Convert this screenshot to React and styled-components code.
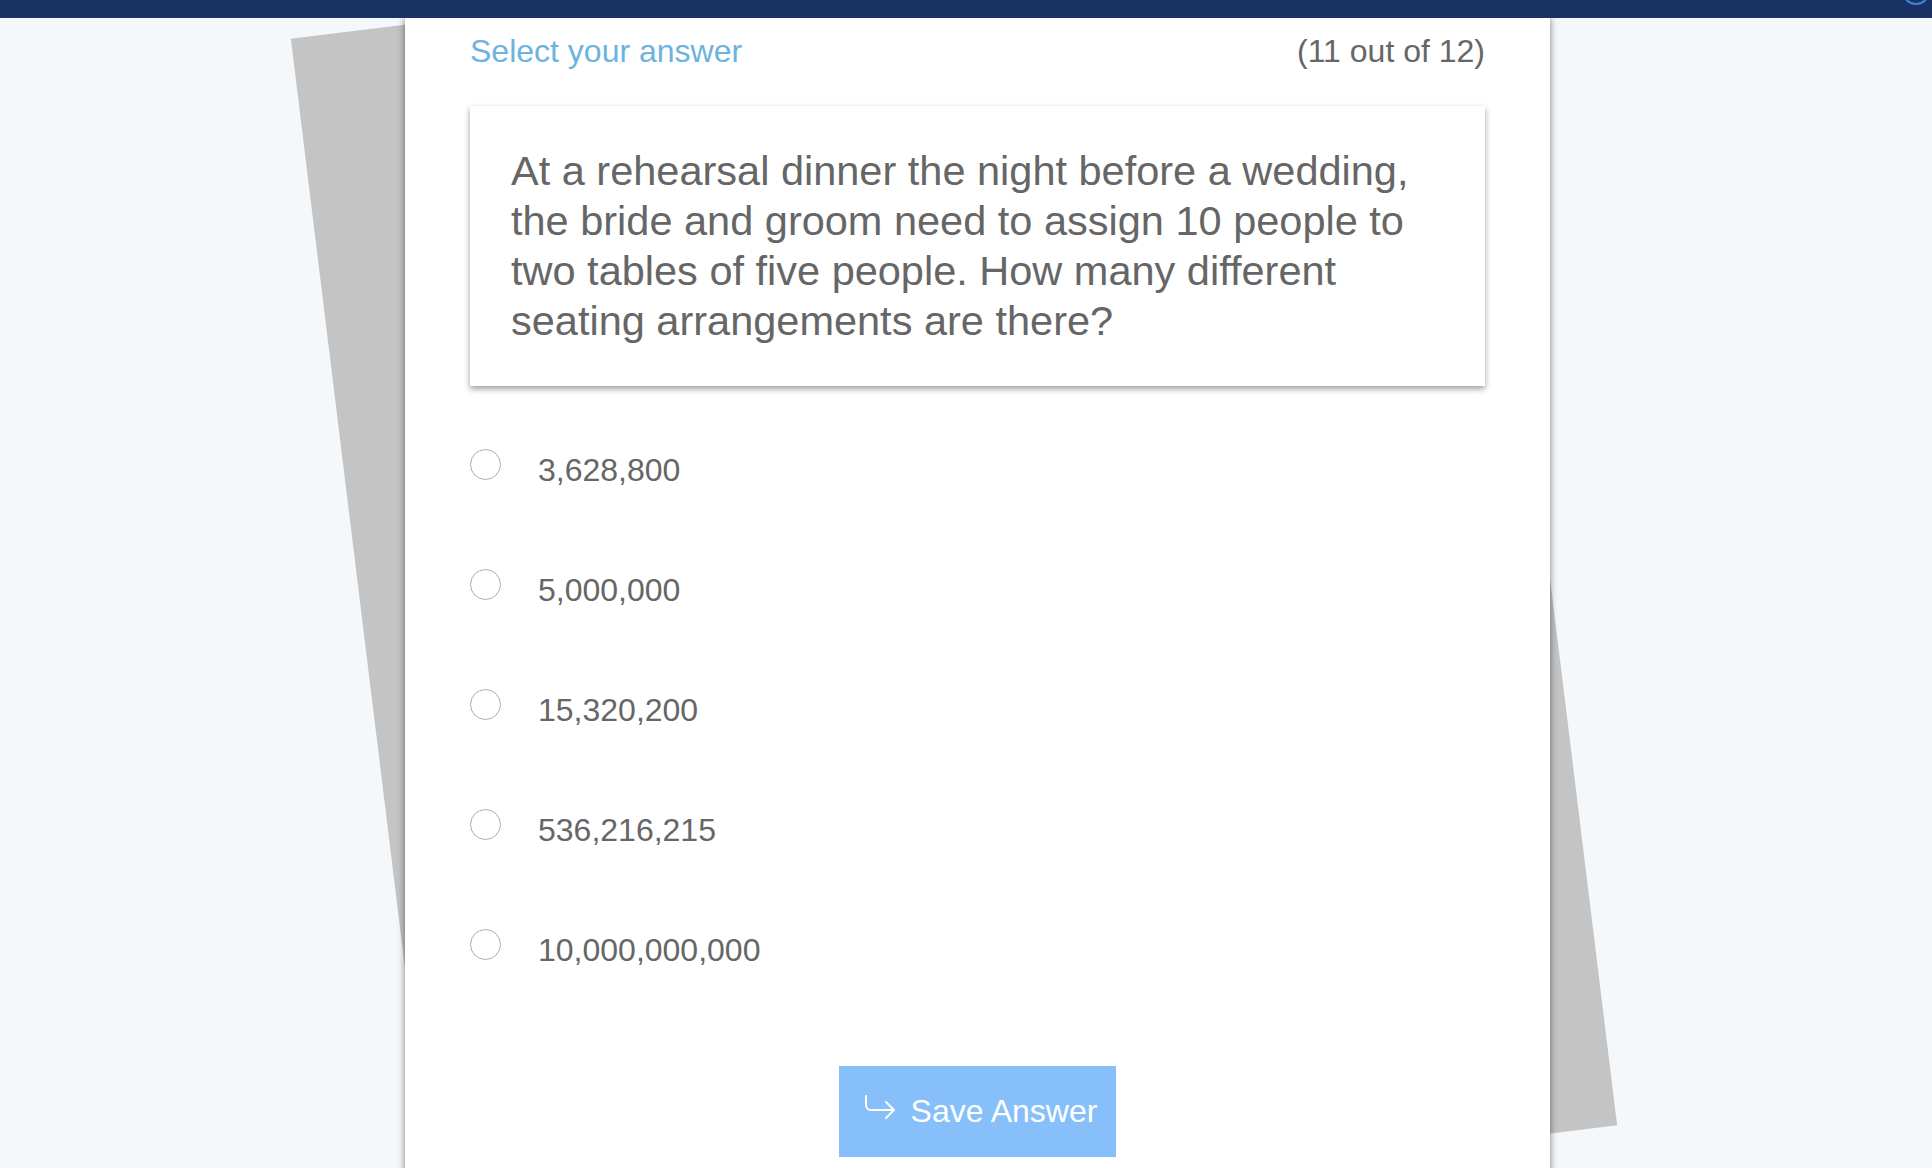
import React from 'react';
import styled, { createGlobalStyle } from 'styled-components';

const GlobalStyle = createGlobalStyle`
  html, body {
    margin: 0;
    padding: 0;
    overflow: hidden;
  }
  body {
    background: #f4f8fb;
    font-family: 'Liberation Sans', Arial, sans-serif;
  }
`;

const TopBar = styled.header`
  position: relative;
  z-index: 2;
  display: flex;
  justify-content: flex-end;
  height: 18px;
  background: #1a3263;
  overflow: hidden;
`;

// avatar sits mostly above the viewport, only its bottom rim shows
const Avatar = styled.div`
  width: 24px;
  height: 24px;
  margin: -23px 2px 0 0;
  border-radius: 50%;
  border: 2px solid #3a86d4;
  background: #1a3263;
`;

const Main = styled.main`
  position: relative;
  display: flex;
  padding-left: 405px;
  min-height: 1150px;
`;

// rotated sheet peeking out behind the card
const Paper = styled.div`
  position: absolute;
  left: 362px;
  top: -56px;
  width: 1184px;
  height: 1240px;
  background: #c4c4c4;
  transform: rotate(-7deg);
  z-index: 0;
`;

const Card = styled.section`
  position: relative;
  z-index: 1;
  box-sizing: border-box;
  width: 1145px;
  min-height: 1200px;
  padding: 15px 65px 40px;
  background: #ffffff;
  box-shadow: 0 0 7px rgba(0, 0, 0, 0.5);
`;

const Header = styled.div`
  display: flex;
  justify-content: space-between;
  align-items: baseline;
  font-size: 32px;
  line-height: 37px;
`;

const Title = styled.h2`
  margin: 0;
  font-size: inherit;
  font-weight: normal;
  color: #6cb3e0;
`;

const Counter = styled.span`
  color: #666;
`;

const QuestionBox = styled.div`
  margin-top: 36px;
  padding: 40px 40px 40px 41px;
  font-size: 41.5px;
  line-height: 50px;
  color: #666;
  background: #fff;
  box-shadow: 0 3px 6px rgba(0, 0, 0, 0.38);
`;

const Options = styled.div`
  margin-top: 24px;
  display: flex;
  flex-direction: column;
`;

const Option = styled.label`
  display: flex;
  align-items: center;
  gap: 37px;
  height: 120px;
  cursor: pointer;
`;

const Radio = styled.span`
  box-sizing: border-box;
  flex: none;
  width: 31px;
  height: 31px;
  margin-bottom: 12px;
  border-radius: 50%;
  border: 1.5px solid #a4aebd;
  background: #fff;
`;

const OptionText = styled.span`
  font-size: 32px;
  color: #666;
`;

const Actions = styled.div`
  display: flex;
  justify-content: center;
  margin-top: 56px;
`;

const SaveButton = styled.button`
  display: flex;
  align-items: center;
  gap: 15px;
  height: 91px;
  padding: 0 19px 0 25px;
  border: none;
  background: #86bff9;
  color: #fff;
  font-family: inherit;
  font-size: 32px;
  cursor: pointer;

  svg {
    margin-bottom: 8px;
  }
`;

function ReplyIcon() {
  return (
    <svg width="32" height="26" viewBox="0 0 32 26" fill="none" stroke="#fff" strokeWidth="2" strokeLinecap="round" strokeLinejoin="round">
      <path d="M2 1 V10 A5 5 0 0 0 7 15 H30" />
      <path d="M22 7 L30 15 L22 23" />
    </svg>
  );
}

const answers = ['3,628,800', '5,000,000', '15,320,200', '536,216,215', '10,000,000,000'];

export default function App() {
  return (
    <>
      <GlobalStyle />
      <TopBar>
        <Avatar />
      </TopBar>
      <Main>
        <Paper />
        <Card>
          <Header>
            <Title>Select your answer</Title>
            <Counter>(11 out of 12)</Counter>
          </Header>
          <QuestionBox>
            At a rehearsal dinner the night before a wedding, the bride and groom need to assign 10 people to two tables of five people. How many different seating arrangements are there?
          </QuestionBox>
          <Options>
            {answers.map((a) => (
              <Option key={a}>
                <Radio />
                <OptionText>{a}</OptionText>
              </Option>
            ))}
          </Options>
          <Actions>
            <SaveButton>
              <ReplyIcon />
              Save Answer
            </SaveButton>
          </Actions>
        </Card>
      </Main>
    </>
  );
}
